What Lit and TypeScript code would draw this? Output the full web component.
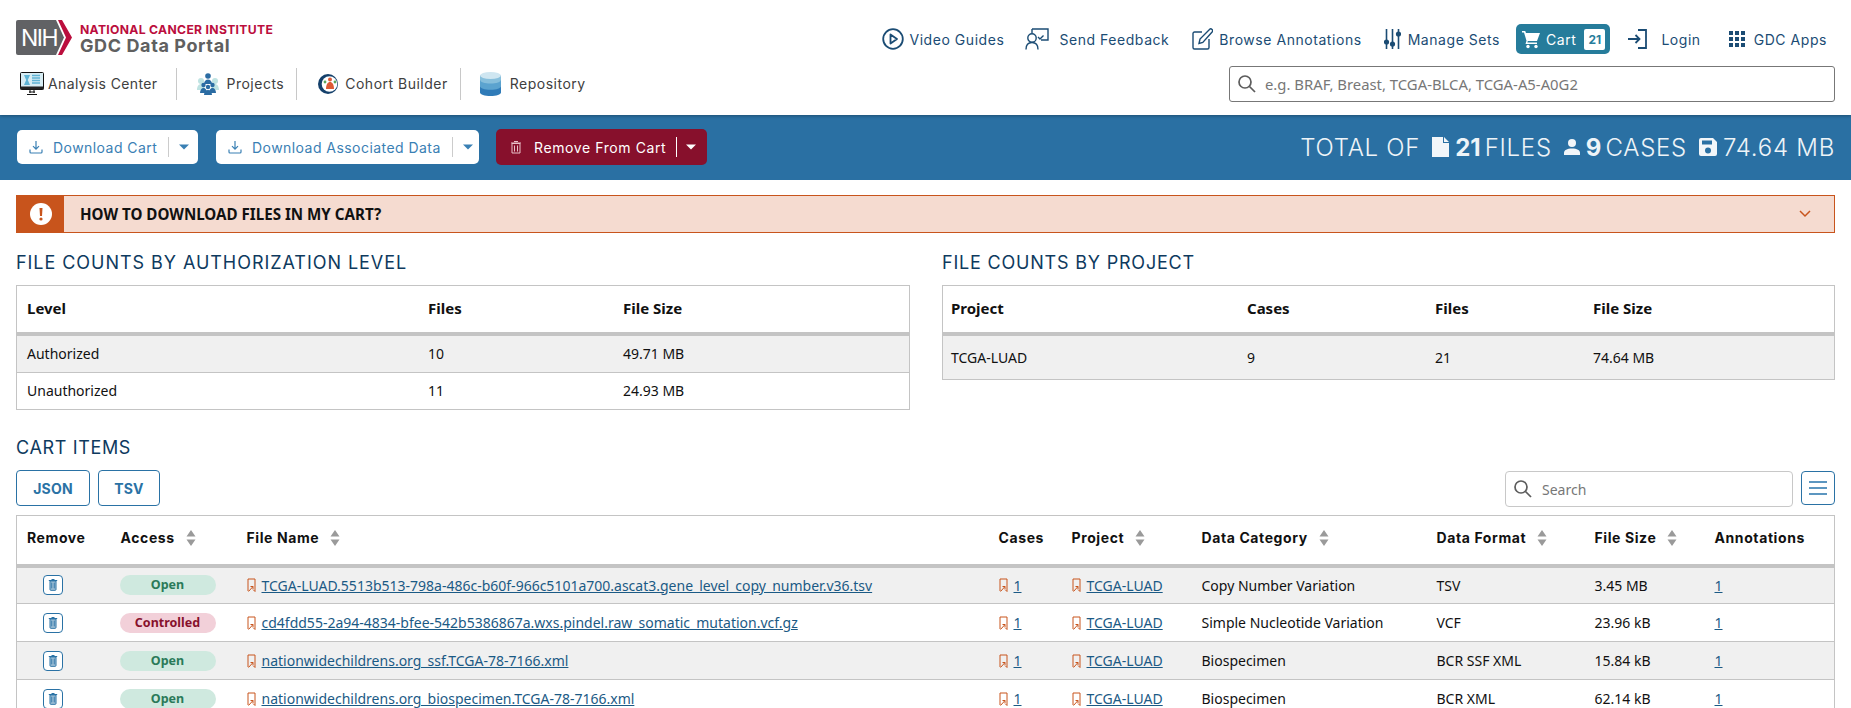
import { LitElement, html, svg, css } from "lit";
import { customElement } from "lit/decorators.js";

const pin = html`<svg class="pin" viewBox="0 0 9 14" width="9" height="14" fill="none" stroke="#c8541c" stroke-width="1"><path d="M1 13V1h7v12.500l-2-2"/><path d="M1.500 13.500L6 8.500M3.500 8.500H6V11"/></svg>`;
const trash = html`<svg viewBox="0 0 20 20" width="20" height="20" fill="none"><rect x=".5" y=".5" width="19" height="19" rx="3.5" fill="#fff" stroke="#2a72a5"/><path d="M7 6h6v8.500a.8.8 0 0 1-.8.8H7.800a.8.8 0 0 1-.8-.8z" fill="#a9c6da" stroke="#2a72a5"/><path d="M5.800 5.500h8.400M8.500 4.500h3M8.800 7.500v6M11.200 7.500v6" stroke="#2a72a5"/></svg>`;
const sortIcon = html`<svg class="sort" viewBox="0 0 10 16" width="10" height="16" fill="#9a9a9a"><path d="M5 0l4.500 6.500h-9zM5 16L.5 9.500h9z"/></svg>`;
const searchIcon = html`<svg viewBox="0 0 20 20" width="20" height="20" fill="none" stroke="#5c5c5c" stroke-width="1.700"><circle cx="8" cy="8" r="6"/><path d="M12.500 12.500l5.500 5.500"/></svg>`;
const caret = (c: string) => svg`<svg viewBox="0 0 10 6" width="10" height="6" fill="${c}"><path d="M0 .5h10L5 5.500z"/></svg>`;
const dlIcon = html`<svg viewBox="0 0 14 14" width="14" height="14" fill="none" stroke="#3a80b4" stroke-width="1.200"><path d="M7 1v8M4 6.200L7 9.200l3-3M1 9.500v2.500a1 1 0 0 0 1 1h10a1 1 0 0 0 1-1V9.500"/></svg>`;

const icons = {
  video: html`<svg viewBox="0 0 22 22" width="22" height="22" fill="none" stroke="#1b4c74" stroke-width="1.800"><circle cx="11" cy="11" r="9.800"/><path d="M8.500 6.500L15 11l-6.500 4.500z" stroke-linejoin="round"/></svg>`,
  feedback: html`<svg viewBox="0 0 24 22" width="24" height="22" fill="none" stroke="#1b4c74" stroke-width="1.400"><path d="M7 1h16v11h-7"/><path d="M7 1v4"/><circle cx="7" cy="10" r="4.200"/><path d="M1 21.500c0-5 2.500-7 6-7s6 2 6 7"/><path d="M13 9l2 2 3.500-3.500"/></svg>`,
  edit: html`<svg viewBox="0 0 21 22" width="21" height="22" fill="none" stroke="#1b4c74" stroke-width="1.400"><path d="M10 4H2.500A1.500 1.500 0 0 0 1 5.500v14A1.500 1.500 0 0 0 2.500 21h13a1.500 1.500 0 0 0 1.500-1.500V11"/><path d="M7 15.500l1-4.500L17.500 1.500a1.800 1.800 0 0 1 2.600 2.500L10.800 14.500z"/></svg>`,
  sets: html`<svg viewBox="0 0 17 22" width="17" height="22" fill="none" stroke="#1b4c74" stroke-width="1.600"><path d="M2.500 1v20M8.500 1v20M14.500 1v20"/><circle cx="2.500" cy="14" r="1.800" fill="#1b4c74"/><circle cx="8.500" cy="16" r="1.800" fill="#1b4c74"/><circle cx="14.500" cy="6" r="1.800" fill="#1b4c74"/></svg>`,
  cart: html`<svg viewBox="0 0 20 20" width="20" height="20" fill="#fff"><path d="M1 2h3.200l.8 2h14l-3 8H6.800l-.4 1.500H16V15H4.500l1-3.200L3 3.500H1z"/><circle cx="7" cy="17.500" r="1.700"/><circle cx="15" cy="17.500" r="1.700"/></svg>`,
  login: html`<svg viewBox="0 0 20 20" width="20" height="20" fill="none" stroke="#1b4c74" stroke-width="1.800"><path d="M1 10h11M8.500 6l4 4-4 4M11 1h8v18h-8"/></svg>`,
  apps: html`<svg viewBox="0 0 16 16" width="16" height="16" fill="#1b4c74"><rect width="4" height="4"/><rect x="6" width="4" height="4"/><rect x="12" width="4" height="4"/><rect y="6" width="4" height="4"/><rect x="6" y="6" width="4" height="4"/><rect x="12" y="6" width="4" height="4"/><rect y="12" width="4" height="4"/><rect x="6" y="12" width="4" height="4"/><rect x="12" y="12" width="4" height="4"/></svg>`,
  analysis: html`<svg viewBox="0 0 24 24" width="24" height="24"><rect x=".5" y=".5" width="23" height="17" rx="1" fill="#d7edf4" stroke="#111"/><rect x=".5" y="14.500" width="23" height="3" fill="#222"/><path d="M9 20h6M7 22.500h10M10 18v3M14 18v3" stroke="#111" fill="none"/><path d="M4 3h6L7.800 8 10 13H4l2.200-5z" fill="#5fb3d4"/><path d="M12 3.500h8M12 6h8M12 8.500h8M12 11h8" stroke="#5fb3d4" stroke-width="1.300"/></svg>`,
  projects: html`<svg viewBox="0 0 22 22" width="22" height="22"><circle cx="4" cy="8" r="3" fill="#bfe3e2"/><circle cx="18" cy="8" r="3" fill="#bfe3e2"/><path d="M0 17c0-4 2-6 4-6s4 2 4 6zM14 17c0-4 2-6 4-6s4 2 4 6z" fill="#bfe3e2"/><circle cx="11" cy="3" r="2.800" fill="#2b6ca3"/><path d="M7 11c0-3 2-4.500 4-4.500s4 1.500 4 4.500z" fill="#2b6ca3"/><circle cx="6.500" cy="12" r="2.200" fill="#2b6ca3"/><circle cx="15.500" cy="12" r="2.200" fill="#2b6ca3"/><circle cx="11" cy="14" r="2.200" fill="#2b6ca3"/><path d="M3 20c0-3 1.500-5 3.500-5s3.500 2 3.500 5zM12 20c0-3 1.500-5 3.500-5s3.500 2 3.500 5zM7 22c0-3 2-5 4-5s4 2 4 5z" fill="#2b6ca3"/></svg>`,
  cohort: html`<svg viewBox="0 0 20 22" width="20" height="22"><circle cx="10" cy="11" r="10" fill="#14406b"/><circle cx="11.500" cy="11" r="7.800" fill="#fff"/><circle cx="12" cy="6.500" r="2" fill="#dd5a35"/><path d="M8 16c0-4.500 1.800-7 4-7s4 2.500 4 7z" fill="#dd5a35"/><circle cx="7" cy="9" r="1.400" fill="#5aa85c"/><circle cx="17" cy="9" r="1.400" fill="#5aa85c"/></svg>`,
  repo: html`<svg viewBox="0 0 21 27" width="21" height="24" preserveAspectRatio="none"><path d="M0 4v19c0 2 4.700 4 10.500 4S21 25 21 23V4z" fill="#2f7bb8"/><path d="M0 10v6c0 2 4.700 4 10.500 4S21 18 21 16v-6z" fill="#5ba3cf"/><path d="M0 4v5c0 2 4.700 4 10.500 4S21 11 21 9V4z" fill="#87bfdc"/><ellipse cx="10.500" cy="4" rx="10.500" ry="4" fill="#cfe6f1"/></svg>`,
};

type Row = { access: "Open" | "Controlled"; name: string; category: string; format: string; size: string };

const rows: Row[] = [
  { access: "Open", name: "TCGA-LUAD.5513b513-798a-486c-b60f-966c5101a700.ascat3.gene_level_copy_number.v36.tsv", category: "Copy Number Variation", format: "TSV", size: "3.45 MB" },
  { access: "Controlled", name: "cd4fdd55-2a94-4834-bfee-542b5386867a.wxs.pindel.raw_somatic_mutation.vcf.gz", category: "Simple Nucleotide Variation", format: "VCF", size: "23.96 kB" },
  { access: "Open", name: "nationwidechildrens.org_ssf.TCGA-78-7166.xml", category: "Biospecimen", format: "BCR SSF XML", size: "15.84 kB" },
  { access: "Open", name: "nationwidechildrens.org_biospecimen.TCGA-78-7166.xml", category: "Biospecimen", format: "BCR XML", size: "62.14 kB" },
];

@customElement("app-root")
export class AppRoot extends LitElement {
  static styles = css`
    :host {
      display: block;
      height: 708px;
      overflow: hidden;
      background: #fff;
      font-family: "Noto Sans", "Open Sans", sans-serif;
      font-size: 14px;
      color: #111;
      --mont: Inter, "Noto Sans", sans-serif;
    }
    svg { display: block; flex: none; }
    .header { height: 115px; position: relative; z-index: 1; box-shadow: 0 1px 3px rgba(0,0,0,.3); padding: 0 16px; box-sizing: border-box; display: grid; grid-template-columns: 1fr auto; }
    .logo { display: flex; gap: 8px; margin-top: 20px; height: 35px; }
    .nih { width: 56px; height: 35px; }
    .logo-text { font-family: var(--mont); font-weight: 700; }
    .nci { font-size: 12.2px; line-height: 14px; color: #bb0e3d; margin-top: 3px; letter-spacing: .3px; white-space: nowrap; }
    .gdc { font-size: 18px; line-height: 18px; color: #606060; letter-spacing: .6px; white-space: nowrap; }
    .main-nav { display: flex; height: 32px; margin-top: 13px; font-family: var(--mont); color: #404040; letter-spacing: .5px; }
    .main-nav a { display: flex; align-items: center; gap: 4px; border-right: 1px solid #c8c8c8; padding-bottom: 1px; box-sizing: border-box; }
    .main-nav a:last-child { border: none; }
    .nav-a { padding: 0 19px 0 4px; letter-spacing: .38px; }
    .nav-p { padding: 0 12px 0 20px; gap: 7px !important; }
    .nav-c { padding: 0 12px 0 21px; gap: 7px !important; }
    .nav-r { padding: 0 0 0 19px; gap: 9px !important; }
    .right { display: flex; flex-direction: column; align-items: flex-end; }
    .top-nav { display: flex; align-items: center; height: 30px; margin-top: 24px; font-family: var(--mont); color: #1b4c74; letter-spacing: .55px; white-space: nowrap; }
    .top-nav a { display: flex; align-items: center; }
    .cart { background: #267c9b; color: #fff; border-radius: 5px; height: 30px; padding: 0 5px 0 5px; gap: 5px; }
    .cart b { background: #fff; color: #267c9b; font-size: 12px; letter-spacing: 0; width: 21px; height: 21px; display: flex; align-items: center; justify-content: center; border-radius: 2px; margin-left: 3px; }
    .search { box-sizing: border-box; width: 606px; height: 36px; margin-top: 12px; border: 1px solid #777; border-radius: 3px; display: flex; align-items: center; gap: 8px; padding-left: 7px; color: #777; font-size: 14.85px; }
    .bar { height: 65px; box-sizing: border-box; padding: 0 16px 1px 17px; background: #2a70a3; display: flex; align-items: center; color: #fff; }
    .btn { height: 34px; box-sizing: border-box; border-radius: 5px; background: #fff; color: #3a80b4; display: flex; align-items: center; font-family: var(--mont); padding-left: 12px; letter-spacing: .45px; white-space: nowrap; }
    .btn .t { margin-left: 10px; }
    .btn .sep { width: 1px; height: 20px; background: #ccc; margin: 0 10px 0 11px; }
    .dl-cart { width: 181px; margin-right: 18px; }
    .dl-assoc { width: 263px; margin-right: 17px; }
    .rm { width: 211px; height: 36px; background: #87102c; color: #fff; padding-left: 14px; letter-spacing: .6px; }
    .rm .t { margin-left: 12px; }
    .rm .sep { background: #fff; height: 20px; margin: 0 9px 0 10px; }
    .total { margin-left: auto; display: flex; align-items: center; font-family: var(--mont); font-size: 24px; font-weight: 300; color: #eef4f8; white-space: nowrap; letter-spacing: .75px; }
    .total b { font-weight: 700; letter-spacing: 0; margin-right: 4px; }
    .total svg { margin: 0 6px 0 12px; }
    .content { padding: 15px 16px 0; }
    .alert { height: 38px; box-sizing: border-box; border: 1px solid #c8541c; background: #f5dbd0; display: flex; align-items: center; font-weight: 700; font-size: 15.15px; color: #111; }
    .alert .ico { width: 47px; height: 100%; background: #c8541c; display: flex; align-items: center; justify-content: center; }
    .alert .txt { margin-left: 16px; flex: 1; }
    .alert svg.chev { margin-right: 23px; }
    .two { display: grid; grid-template-columns: 894px 893px; gap: 32px; margin-top: 19px; }
    h2 { margin: 0; font-family: var(--mont); font-weight: 400; font-size: 18px; line-height: 22px; color: #0e3a5e; letter-spacing: .8px; white-space: nowrap; }
    h2.auth { letter-spacing: .95px; }
    .tbl { border: 1px solid #c4c4c4; margin-top: 11px; }
    .tr { display: grid; align-items: center; }
    .hd { height: 44px; padding-bottom: 2px; font-weight: 700; font-size: 15px; border-bottom: 4px solid #c4c4c4; }
    .hd + .tr { background: #f0f0f0; }
    .cell-row { height: 34px; padding-bottom: 2px; }
    .cell-row + .cell-row { border-top: 1px solid #c4c4c4; background: #fff !important; }
    .left-cols { grid-template-columns: 401px 195px 1fr; padding-left: 10px; }
    .right-cols { grid-template-columns: 296px 188px 158px 1fr; padding-left: 8px; }
    .right-tbl .cell-row { height: 43px; padding-bottom: 0; }
    .ci { margin-top: 27px; letter-spacing: .65px; }
    .tools { display: flex; margin-top: 11px; gap: 8px; align-items: flex-start; }
    .out { box-sizing: border-box; height: 36px; border: 1px solid #2a72a5; border-radius: 4px; color: #2a72a5; font-weight: 700; font-family: var(--mont); font-size: 14px; letter-spacing: .2px; display: flex; align-items: center; justify-content: center; background: #fff; }
    .json { width: 74px; }
    .tsv { width: 62px; }
    .find { margin-left: auto; box-sizing: border-box; width: 288px; height: 36px; margin-top: 1px; border: 1px solid #c8c8c8; border-radius: 4px; display: flex; align-items: center; padding-left: 7px; gap: 9px; color: #777; }
    .menu { box-sizing: border-box; width: 34px; height: 34px; margin-top: 1px; border: 1px solid #2a72a5; border-radius: 4px; display: flex; align-items: center; justify-content: center; }
    table { margin-top: 8px; width: 1819px; border-collapse: collapse; table-layout: fixed; border: 1px solid #c4c4c4; border-bottom: none; }
    th { height: 50px; text-align: left; padding: 0 0 4px 10px; font-family: var(--mont); font-size: 14px; font-weight: 700; letter-spacing: .6px; border-bottom: 4px solid #c4c4c4; white-space: nowrap; box-sizing: border-box; }
    th span { display: inline-flex; align-items: center; gap: 11px; }
    td { height: 38px; padding: 0 0 0 10px; border-bottom: 1px solid #c4c4c4; white-space: nowrap; box-sizing: border-box; font-size: 14px; }
    tbody tr:nth-child(odd) { background: #f0f0f0; }
    .trash { margin-left: 16px; }
    .pill { display: block; width: 96px; height: 20px; border-radius: 10px; font-size: 12.5px; line-height: 20px; font-weight: 700; text-align: center; margin-left: -1px; }
    .pill.Open { background: #cfe9df; color: #2a7a59; }
    .pill.Controlled { background: #f2d0d9; color: #87102c; }
    .lnk { display: flex; align-items: center; gap: 6px; }
    .lnk u, .anno { color: #1b5a85; text-decoration: underline; }
  `;

  private navItem(cls: string, icon: unknown, label: string) {
    return html`<a class=${cls}>${icon}<span>${label}</span></a>`;
  }

  render() {
    return html`
      <div class="header">
        <div>
          <div class="logo">
            <svg class="nih" viewBox="0 0 56 35">
              <path d="M2 0h38l8 17.500L40 35H2a2 2 0 0 1-2-2V2a2 2 0 0 1 2-2z" fill="#616265"/>
              <path d="M42 0h4l10 17.500L46 35h-4l8-17.500z" fill="#bb0e3d"/>
              <text x="5" y="26" font-family="Inter, sans-serif" font-size="23" fill="#fff" letter-spacing="-1.500">NIH</text>
            </svg>
            <div class="logo-text">
              <div class="nci">NATIONAL CANCER INSTITUTE</div>
              <div class="gdc">GDC Data Portal</div>
            </div>
          </div>
          <div class="main-nav">
            ${this.navItem("nav-a", icons.analysis, "Analysis Center")}
            ${this.navItem("nav-p", icons.projects, "Projects")}
            ${this.navItem("nav-c", icons.cohort, "Cohort Builder")}
            ${this.navItem("nav-r", icons.repo, "Repository")}
          </div>
        </div>
        <div class="right">
          <div class="top-nav">
            <a style="gap:5px">${icons.video}Video Guides</a>
            <a style="gap:10px;margin-left:21px">${icons.feedback}Send Feedback</a>
            <a style="gap:6px;margin-left:23px">${icons.edit}Browse Annotations</a>
            <a style="gap:7px;margin-left:22px">${icons.sets}Manage Sets</a>
            <a class="cart" style="margin-left:16px">${icons.cart}Cart<b>21</b></a>
            <a style="gap:14px;margin-left:17px">${icons.login}Login</a>
            <a style="gap:9px;margin-left:28px;margin-right:8px">${icons.apps}GDC Apps</a>
          </div>
          <div class="search">${searchIcon}<span>e.g. BRAF, Breast, TCGA-BLCA, TCGA-A5-A0G2</span></div>
        </div>
      </div>

      <div class="bar">
        <div class="btn dl-cart">${dlIcon}<span class="t">Download Cart</span><i class="sep"></i>${caret("#3a80b4")}</div>
        <div class="btn dl-assoc">${dlIcon}<span class="t">Download Associated Data</span><i class="sep"></i>${caret("#3a80b4")}</div>
        <div class="btn rm">
          <svg viewBox="0 0 12 14" width="12" height="14" fill="none" stroke="#e8c0c8"><path d="M2 3.500h8V13H2zM1 3h10M4 1.500h4M4.500 5.500v6M7.500 5.500v6"/></svg>
          <span class="t">Remove From Cart</span><i class="sep"></i>${caret("#fff")}
        </div>
        <div class="total">
          <span>TOTAL OF</span>
          <svg viewBox="0 0 17 20" width="17" height="20" fill="#f2f6f9"><path d="M0 0h11v6h6v14H0zM12 0l5 5h-5z"/></svg>
          <b>21</b><span>FILES</span>
          <svg viewBox="0 0 16 16" width="16" height="16" fill="#f2f6f9"><circle cx="8" cy="4" r="4"/><path d="M0 16v-2c0-3 3-4.500 8-4.500s8 1.500 8 4.500v2z"/></svg>
          <b>9</b><span>CASES</span>
          <svg viewBox="0 0 18 18" width="18" height="18" fill="#f2f6f9"><path d="M2 0h12l4 4v12a2 2 0 0 1-2 2H2a2 2 0 0 1-2-2V2a2 2 0 0 1 2-2zm1 2.500v4h10v-4zM9 9.500a3 3 0 1 0 0 6 3 3 0 0 0 0-6z" fill-rule="evenodd"/></svg>
          <span>74.64 MB</span>
        </div>
      </div>

      <div class="content">
        <div class="alert">
          <div class="ico">
            <svg viewBox="0 0 22 22" width="22" height="22"><circle cx="11" cy="11" r="11" fill="#fff"/><path d="M9.500 5h3l-.5 8h-2z" fill="#c8541c"/><circle cx="11" cy="16" r="1.600" fill="#c8541c"/></svg>
          </div>
          <div class="txt">HOW TO DOWNLOAD FILES IN MY CART?</div>
          <svg class="chev" viewBox="0 0 12 8" width="12" height="8" fill="none" stroke="#c8541c" stroke-width="1.500"><path d="M1 1l5 5 5-5"/></svg>
        </div>

        <div class="two">
          <div>
            <h2 class="auth">FILE COUNTS BY AUTHORIZATION LEVEL</h2>
            <div class="tbl">
              <div class="tr hd left-cols"><span>Level</span><span>Files</span><span>File Size</span></div>
              <div class="tr cell-row left-cols"><span>Authorized</span><span>10</span><span>49.71 MB</span></div>
              <div class="tr cell-row left-cols"><span>Unauthorized</span><span>11</span><span>24.93 MB</span></div>
            </div>
          </div>
          <div>
            <h2>FILE COUNTS BY PROJECT</h2>
            <div class="tbl right-tbl">
              <div class="tr hd right-cols"><span>Project</span><span>Cases</span><span>Files</span><span>File Size</span></div>
              <div class="tr cell-row right-cols"><span>TCGA-LUAD</span><span>9</span><span>21</span><span>74.64 MB</span></div>
            </div>
          </div>
        </div>

        <h2 class="ci">CART ITEMS</h2>
        <div class="tools">
          <div class="out json">JSON</div>
          <div class="out tsv">TSV</div>
          <div class="find">${searchIcon}<span>Search</span></div>
          <div class="menu">
            <svg viewBox="0 0 18 14" width="18" height="14" fill="#5c96c0"><rect width="18" height="2"/><rect y="6" width="18" height="2"/><rect y="12" width="18" height="2"/></svg>
          </div>
        </div>

        <table>
          <colgroup>
            <col style="width:94px" /><col style="width:126px" /><col style="width:752px" /><col style="width:73px" />
            <col style="width:130px" /><col style="width:235px" /><col style="width:158px" /><col style="width:120px" /><col />
          </colgroup>
          <thead>
            <tr>
              <th>Remove</th>
              <th><span>Access ${sortIcon}</span></th>
              <th><span>File Name ${sortIcon}</span></th>
              <th>Cases</th>
              <th><span>Project ${sortIcon}</span></th>
              <th><span>Data Category ${sortIcon}</span></th>
              <th><span>Data Format ${sortIcon}</span></th>
              <th><span>File Size ${sortIcon}</span></th>
              <th>Annotations</th>
            </tr>
          </thead>
          <tbody>
            ${rows.map(
              (r) => html`<tr>
                <td><div class="trash">${trash}</div></td>
                <td><span class="pill ${r.access}">${r.access}</span></td>
                <td><div class="lnk">${pin}<u>${r.name}</u></div></td>
                <td><div class="lnk">${pin}<u>1</u></div></td>
                <td><div class="lnk">${pin}<u>TCGA-LUAD</u></div></td>
                <td>${r.category}</td>
                <td>${r.format}</td>
                <td>${r.size}</td>
                <td><span class="anno">1</span></td>
              </tr>`,
            )}
          </tbody>
        </table>
      </div>
    `;
  }
}
